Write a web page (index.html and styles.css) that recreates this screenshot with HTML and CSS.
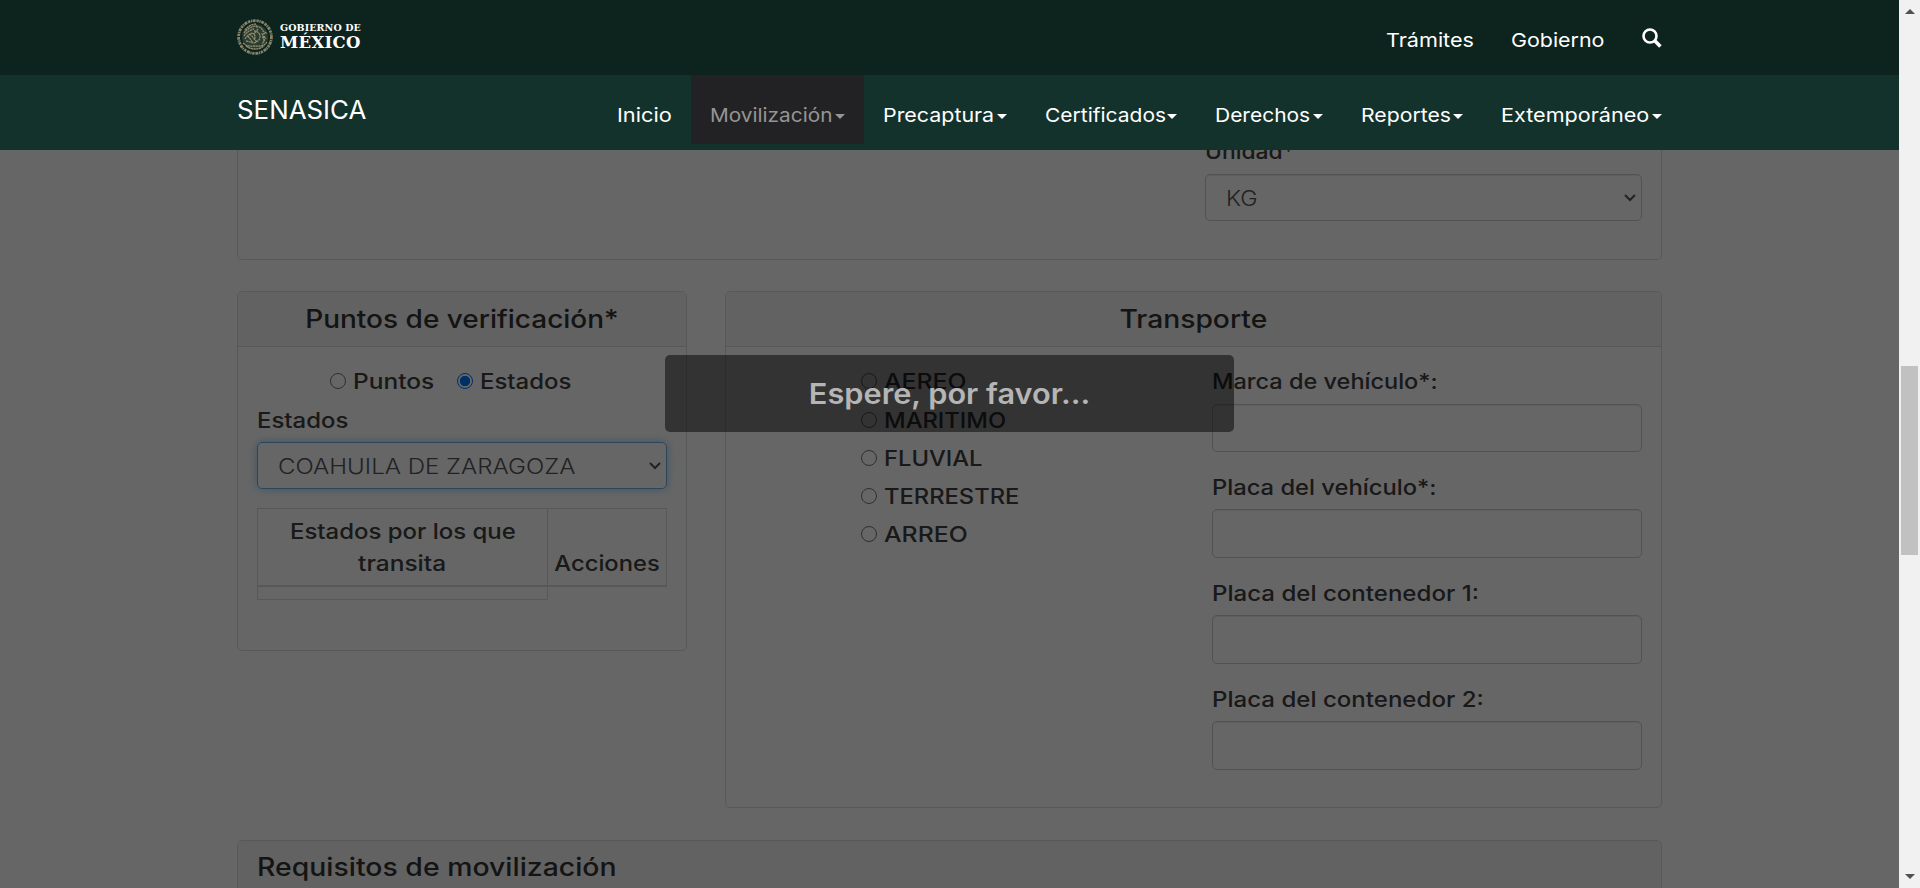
FILE: index.html
```html
<!DOCTYPE html>
<html lang="es">
<head>
<meta charset="utf-8">
<title>SENASICA</title>
<link rel="stylesheet" href="styles.css">
</head>
<body>
<div class="page">
  <header>
    <div class="gob-bar">
      <div class="brand">
        <svg class="seal" viewBox="0 0 36 36" fill="none" stroke="#9c9576">
          <circle cx="18" cy="18" r="16.4" stroke-width="2.8" stroke-dasharray="2.3 .7 1.2 .6 3 .9" opacity=".85"/>
          <circle cx="18" cy="18" r="13" fill="#9c9576" fill-opacity=".22" stroke="none"/>
          <path d="M8 11c3-4 7-6 11-6M7 14c4-5 9-7 13-7M7 17c3-4 6-6 10-7M8 20c2-3 4-5 7-6M19 8c3-1 6 1 7 4l3 2-4 1c2 3 3 7 0 10M17 12c4 0 6 3 6 6s-3 5-6 6M15 14c3 1 4 4 2 7M9 22c3 0 5 2 8 2M6 24c4 4 8 3 12 3s9 1 12-4M9 27c5 4 13 4 18 0M25 18c2 1 3 3 2 5M11 17l5 7M13 15l7 8M21 10l-4 5M27 17l2 3" stroke-width="1.3" stroke-dasharray="2.2 .5" opacity=".9"/>
        </svg>
        <div class="brand-text"><span class="b1">GOBIERNO DE</span><span class="b2">MÉXICO</span></div>
      </div>
      <nav class="gob-links">
        <a><span class="x12">Trámites</span></a>
        <a><span class="x11">Gobierno</span></a>
        <svg class="search" viewBox="0 0 20 20" fill="none" stroke="#fff"><circle cx="8" cy="8" r="6.5" stroke-width="2.6"/><path d="M12.8 12.8l5.6 5.6" stroke-width="3.6"/></svg>
      </nav>
    </div>
    <div class="site-bar">
      <div class="site-name"><span class="x4">SENASICA</span></div>
      <nav class="menu">
        <a><span class="x13">Inicio</span></a>
        <a class="active"><span class="x8">Movilización</span><i></i></a>
        <a><span class="x11">Precaptura</span><i></i></a>
        <a><span class="x9">Certificados</span><i></i></a>
        <a><span class="x9">Derechos</span><i></i></a>
        <a><span class="x10">Reportes</span><i></i></a>
        <a><span class="x12">Extemporáneo</span><i></i></a>
      </nav>
    </div>
  </header>
  <main>
    <section class="panel product">
      <div class="unit">
        <label><span class="x8">Unidad*</span></label>
        <div class="select"><span class="x10">KG</span><svg viewBox="0 0 12 8"><path d="M1 1l5 5 5-5"/></svg></div>
      </div>
    </section>
    <div class="row">
      <section class="panel points">
        <h2><span class="x12">Puntos de verificación*</span></h2>
        <div class="body">
          <div class="choice">
            <label><b class="radio"></b><span class="x15">Puntos</span></label>
            <label><b class="radio on"></b><span class="x13">Estados</span></label>
          </div>
          <label class="state-label"><span class="x13">Estados</span></label>
          <div class="select focus"><span class="x14">COAHUILA DE ZARAGOZA</span><svg viewBox="0 0 12 8"><path d="M1 1l5 5 5-5"/></svg></div>
          <table>
            <thead><tr><th class="c1"><span class="x13">Estados por los que</span><br><span class="x15">transita</span></th><th><span class="x12">Acciones</span></th></tr></thead>
            <tbody><tr><td></td></tr></tbody>
          </table>
        </div>
      </section>
      <section class="panel transport">
        <h2><span class="x13">Transporte</span></h2>
        <div class="body">
          <div class="modes">
            <label><b class="radio"></b><span class="x17">AEREO</span></label>
            <label><b class="radio"></b><span class="x12">MARITIMO</span></label>
            <label><b class="radio"></b><span class="x12">FLUVIAL</span></label>
            <label><b class="radio"></b><span class="x12">TERRESTRE</span></label>
            <label><b class="radio"></b><span class="x17">ARREO</span></label>
          </div>
          <div class="fields">
            <div class="field"><label><span class="x11">Marca de vehículo*:</span></label><div class="input"></div></div>
            <div class="field"><label><span class="x12">Placa del vehículo*:</span></label><div class="input"></div></div>
            <div class="field"><label><span class="x14">Placa del contenedor 1:</span></label><div class="input"></div></div>
            <div class="field"><label><span class="x14">Placa del contenedor 2:</span></label><div class="input"></div></div>
          </div>
        </div>
      </section>
    </div>
    <section class="panel reqs"><h2><span class="x14">Requisitos de movilización</span></h2></section>
    <div class="overlay"></div>
    <div class="wait"><span class="x8">Espere, por favor...</span></div>
  </main>
</div>
<aside class="scroll"><i class="up"></i><div class="thumb"></div><i class="down"></i></aside>
</body>
</html>
```
FILE: styles.css
```css
* { box-sizing: border-box; }
body { margin: 0; width: 1920px; height: 888px; overflow: hidden; display: flex; background: #fff; font-family: Inter, "Open Sans", sans-serif; font-size: 21.2px; line-height: 32px; color: #404040; }
span { white-space: nowrap; display: inline-block; transform-origin: 0 50%; }

/* widened lettering, in percent steps */
.x4 { transform: scaleX(1.035); }
.x8 { transform: scaleX(1.078); }
.x9 { transform: scaleX(1.088); }
.x10 { transform: scaleX(1.1); }
.x11 { transform: scaleX(1.11); }
.x12 { transform: scaleX(1.12); }
.x13 { transform: scaleX(1.13); }
.x14 { transform: scaleX(1.136); }
.x15 { transform: scaleX(1.155); }
.x17 { transform: scaleX(1.17); }

.page { width: 1899px; height: 888px; display: flex; flex-direction: column; }
header { color: #fff; }
.gob-bar, .site-bar { height: 75px; padding: 0 237px; display: flex; justify-content: space-between; }
.gob-bar { background: #0c231e; align-items: center; }
.site-bar { background: #13322b; align-items: flex-start; }
.brand { display: flex; gap: 7px; align-items: center; margin-top: -1px; }
.seal { width: 36px; height: 36px; }
.brand-text { display: flex; flex-direction: column; font-family: "DejaVu Serif", serif; font-weight: bold; }
.b1 { font-size: 9.5px; line-height: 11px; letter-spacing: .1px; }
.b2 { font-size: 16.5px; line-height: 19px; letter-spacing: .3px; }
.gob-links { display: flex; align-items: center; font-size: 19.3px; padding-top: 4px; }
.gob-links a { width: 125px; }
.gob-links a + a { width: 131px; }
.search { width: 20px; height: 20px; margin-top: -3px; }
.site-name { font-size: 25px; line-height: 70px; }
.menu { display: flex; height: 69px; margin-right: -19px; font-size: 19.3px; }
.menu a { display: flex; align-items: center; justify-content: space-between; padding: 11px 18.75px 0 19px; line-height: 58px; }
.menu a:nth-child(1) { width: 93px; }
.menu a:nth-child(2) { width: 173px; }
.menu a:nth-child(3) { width: 162px; }
.menu a:nth-child(4) { width: 170px; }
.menu a:nth-child(5) { width: 145.5px; }
.menu a:nth-child(6) { width: 140px; }
.menu a:nth-child(7) { width: 199.5px; }
.menu a.active { background: #222224; color: #959595; }
.menu i { border: 5px solid transparent; border-top-color: currentColor; border-bottom: 0; margin-top: 2px; }

main { position: relative; width: 1899px; height: 738px; padding: 0 237px; overflow: hidden; }
.panel { border: 1px solid #ddd; border-radius: 5px; }
.product { height: 110px; border-top: 0; border-radius: 0 0 5px 5px; padding: 0 19.5px; display: flex; justify-content: flex-end; }
.unit { width: 436.5px; margin-top: -15px; }
label { display: block; font-weight: 550; }
.select { height: 47px; border: 1px solid #ccc; border-radius: 5px; display: flex; align-items: center; justify-content: space-between; padding: 0 5px 0 19.8px; color: #555; font-weight: 300; box-shadow: inset 0 1px 1px rgba(0,0,0,.075); }
.select svg { width: 12px; height: 8px; fill: none; stroke: #555; stroke-width: 2; }
.unit .select { margin-top: 7px; }
.row { display: flex; gap: 38px; align-items: flex-start; margin: 31px 0 32px; }
.points { width: 450px; height: 360px; }
.transport { width: 937px; height: 517px; }
h2 { margin: 0; height: 55px; line-height: 54px; background: #f5f5f5; border-bottom: 1px solid #ddd; text-align: center; font-size: 25px; font-weight: 500; color: #333; border-radius: 4px 4px 0 0; }
h2 span, th span, .wait span { transform-origin: 50% 50%; }
.body { padding: 18px 19px 0; }
.choice { display: flex; padding-left: 73px; }
.choice label:first-child { width: 127px; }
.choice label, .modes label { display: flex; align-items: center; gap: 7px; }
.radio { width: 16px; height: 16px; border: 1px solid #767676; border-radius: 50%; }
.radio.on { border-color: #0075ff; background: radial-gradient(circle, #0075ff 4.8px, #fff 5.5px); }
.state-label { margin: 7px 0 6px; }
.focus { border-color: #66afe9; box-shadow: 0 0 10px rgba(102,175,233,.6); }
table { width: 410px; margin-top: 19px; border-collapse: collapse; table-layout: fixed; }
th { border: 1px solid #ddd; border-bottom-width: 2px; padding: 6px 0; vertical-align: bottom; font-weight: 550; text-align: center; }
.c1 { width: 290px; }
td { border: 1px solid #ddd; height: 13px; padding: 0; }
.transport .body { display: flex; justify-content: space-between; padding: 0 19px 0 135px; }
.modes { padding-top: 15.4px; }
.modes label { height: 38.2px; }
.fields { width: 430px; padding-top: 18px; }
.field { height: 106px; padding-bottom: 19px; display: flex; flex-direction: column; gap: 6px; }
.field:first-child { gap: 7px; }
.input { flex: 1; border: 1px solid #ccc; border-radius: 5px; box-shadow: inset 0 1px 1px rgba(0,0,0,.075); }
.reqs { height: 90px; }
.reqs h2 { text-align: left; padding-left: 19px; line-height: 52px; }
.reqs span { transform-origin: 0 50%; }
.overlay { position: absolute; inset: 0; background: rgba(0,0,0,.6); }
.wait { position: absolute; left: 665px; top: 205px; width: 569px; height: 77px; border-radius: 5px; background: rgba(0,0,0,.5); color: #b5b5b5; text-align: center; font-size: 28.5px; font-weight: 600; line-height: 77px; }

.scroll { width: 21px; background: #f1f1f1; display: flex; flex-direction: column; align-items: center; padding: 9px 0; }
.thumb { width: 17px; height: 189px; margin-top: 352px; background: #c1c1c1; }
.up, .down { border: 5px solid transparent; }
.up { border-bottom-color: #505050; border-top: 0; }
.down { border-top-color: #505050; border-bottom: 0; margin-top: auto; }
```
